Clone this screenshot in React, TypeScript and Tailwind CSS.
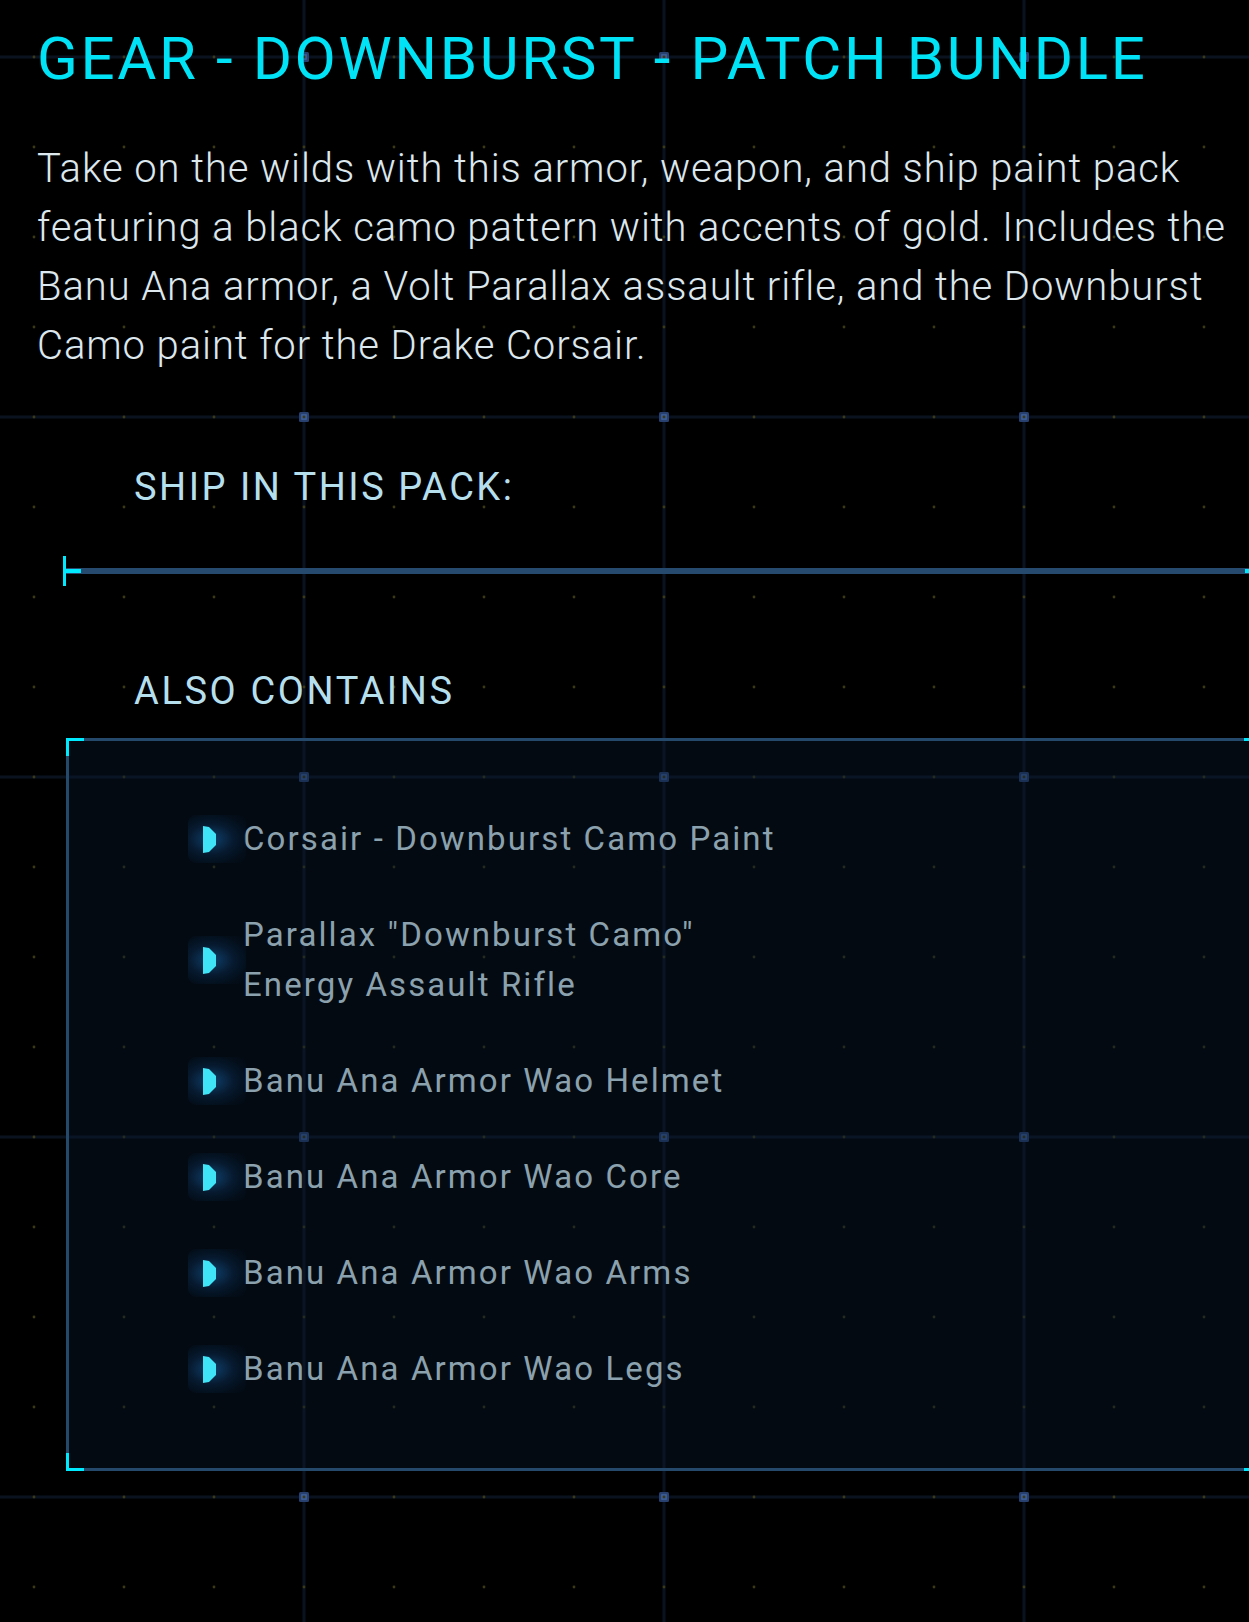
const items: string[][] = [
  ["Corsair - Downburst Camo Paint"],
  ['Parallax "Downburst Camo"', "Energy Assault Rifle"],
  ["Banu Ana Armor Wao Helmet"],
  ["Banu Ana Armor Wao Core"],
  ["Banu Ana Armor Wao Arms"],
  ["Banu Ana Armor Wao Legs"],
];

const paragraph = [
  "Take on the wilds with this armor, weapon, and ship paint pack",
  "featuring a black camo pattern with accents of gold. Includes the",
  "Banu Ana armor, a Volt Parallax assault rifle, and the Downburst",
  "Camo paint for the Drake Corsair.",
];

const GridBackdrop = () => (
  <svg className="absolute inset-0 h-full w-full" aria-hidden="true">
    <defs>
      <pattern id="dots" x="-11" y="12" width="90" height="90" patternUnits="userSpaceOnUse">
        <circle cx="45" cy="45" r="1.4" fill="#3a3a16" />
      </pattern>
      <pattern id="lines" x="124" y="-123" width="360" height="360" patternUnits="userSpaceOnUse">
        <rect x="178.5" y="0" width="3" height="360" fill="#0a1220" />
        <rect x="0" y="178.5" width="360" height="3" fill="#0a1220" />
        <rect x="175" y="175" width="10" height="10" rx="1.5" fill="#27406f" />
        <rect x="177" y="177" width="6" height="6" rx="1" fill="#3a5a94" />
      </pattern>
    </defs>
    <rect width="100%" height="100%" fill="url(#lines)" />
    <rect width="100%" height="100%" fill="url(#dots)" />
  </svg>
);

const Bullet = () => (
  <div className="flex h-[48px] w-[58px] shrink-0 items-center rounded-[8px] bg-[radial-gradient(ellipse_at_40%_50%,rgba(18,76,126,0.85),rgba(10,40,72,0.55)_45%,rgba(6,26,48,0.3)_75%,transparent_100%)] blur-[0.5px]">
    <svg width="14" height="27" viewBox="0 0 14 27" className="ml-[15px]">
      <polygon points="0,0 6,1 13,8 13,19 6,26 0,27" fill="#3fe4f6" />
    </svg>
  </div>
);

const Corner = ({ className }: { className: string }) => (
  <span className={"absolute h-[18px] w-[18px] border-[#00eaff] " + className} />
);

const App = () => {
  return (
    <div className="relative min-h-[1622px] w-full overflow-hidden bg-black font-['Roboto',sans-serif]">
      <GridBackdrop />

      <div className="relative flex flex-col">
        <h1 className="ml-[37px] mt-[29px] whitespace-nowrap text-[60px] font-normal leading-none tracking-[2.6px] text-[#00e2f6]">
          GEAR - DOWNBURST - PATCH BUNDLE
        </h1>

        <p className="ml-[37px] mt-[50px] text-[40px] font-light leading-[59px] tracking-[0.9px] text-[#dce7ee]">
          {paragraph.map((line) => (
            <span key={line} className="block whitespace-nowrap">
              {line}
            </span>
          ))}
        </p>

        <h2 className="ml-[134px] mt-[93px] text-[38px] leading-none tracking-[2.5px] text-[#b6dfee]">
          SHIP IN THIS PACK:
        </h2>

        <div className="relative ml-[63px] mt-[62px] h-[6px] w-[1200px] bg-[#264a6e]">
          <span className="absolute left-0 top-[-12px] h-[30px] w-[3px] bg-[#00eaff]" />
          <span className="absolute left-0 top-[1px] h-[4px] w-[18px] bg-[#00eaff]" />
          <span className="absolute right-[14px] top-[1px] h-[4px] w-[4px] bg-[#00eaff]" />
        </div>

        <h2 className="ml-[134px] mt-[98px] text-[38px] leading-none tracking-[2.6px] text-[#b6dfee]">
          ALSO CONTAINS
        </h2>

        <div className="relative ml-[66px] mt-[28px] w-[1196px] border-[3px] border-[#24496b] bg-[rgba(8,26,44,0.4)] pb-[74px] pl-[119px] pt-[73px]">
          <Corner className="left-[-3px] top-[-3px] border-l-[3px] border-t-[3px]" />
          <Corner className="right-[-3px] top-[-3px] border-r-[3px] border-t-[3px]" />
          <Corner className="bottom-[-3px] left-[-3px] border-b-[3px] border-l-[3px]" />
          <Corner className="bottom-[-3px] right-[-3px] border-b-[3px] border-r-[3px]" />

          <ul className="flex flex-col gap-[46px]">
            {items.map((lines) => (
              <li key={lines[0]} className="flex items-center">
                <Bullet />
                <div className="-ml-[3px] text-[33px] leading-[50px] tracking-[2.1px] text-[#8ba1ad]">
                  {lines.map((l) => (
                    <div key={l} className="whitespace-nowrap">
                      {l}
                    </div>
                  ))}
                </div>
              </li>
            ))}
          </ul>
        </div>
      </div>
    </div>
  );
};

export default App;
